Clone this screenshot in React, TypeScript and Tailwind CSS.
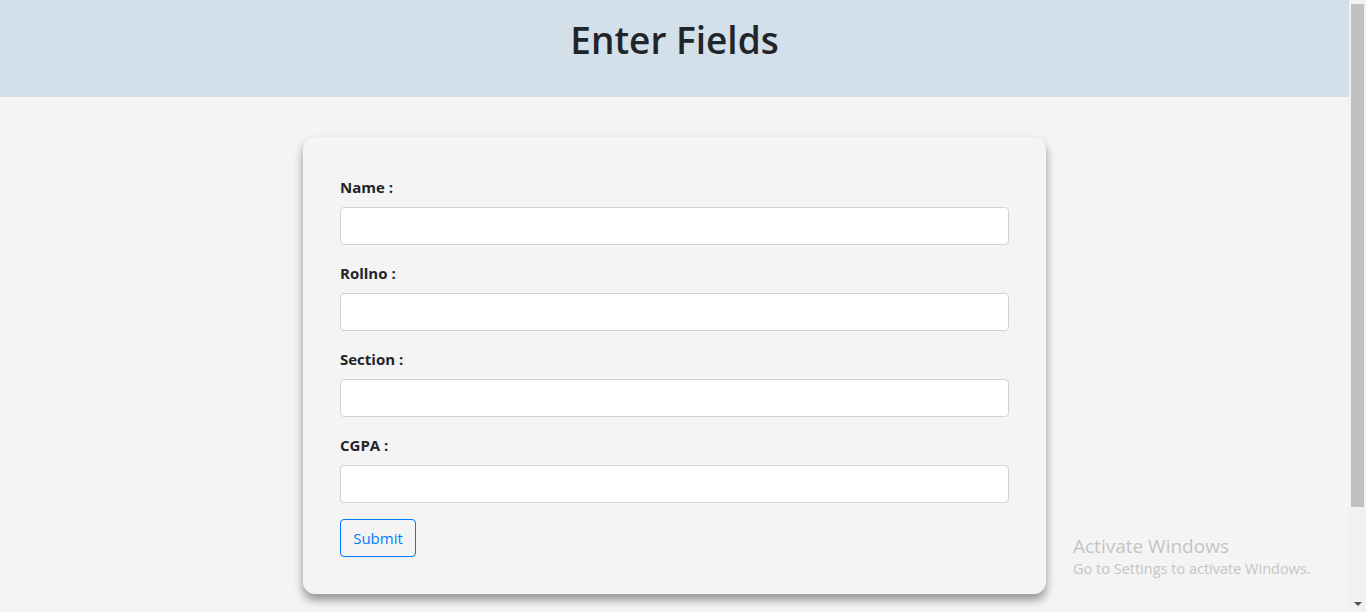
import React from "react";

const font = { fontFamily: '"Open Sans", "Noto Sans", "Liberation Sans", sans-serif' };

function Field({ label }: { label: string }) {
  return (
    <div className="mb-4">
      <label className="block mb-2 text-[15px] leading-6 font-bold text-[#212529]">{label}</label>
      <input
        type="text"
        className="block w-full h-[38px] rounded-[4px] border border-[#ced4da] bg-white px-3 outline-none"
      />
    </div>
  );
}

export default function App() {
  return (
    <div className="relative flex h-[612px] w-full overflow-hidden bg-[#f4f4f4]" style={font}>
      <div className="flex-1 flex flex-col">
        <header className="h-[97px] bg-[#d3dfe9] flex items-start justify-center">
          <h1 className="mt-[15px] text-[37px] leading-[50px] font-semibold text-[#212529]">Enter Fields</h1>
        </header>
        <div className="flex justify-center pt-10">
          <div className="w-[743px] rounded-[12px] bg-[#f4f4f4] px-[37px] pt-[38px] pb-[37px] shadow-[0_6px_10px_rgba(0,0,0,0.4)]">
            <Field label="Name :" />
            <Field label="Rollno :" />
            <Field label="Section :" />
            <Field label="CGPA :" />
            <button className="h-[38px] w-[76px] rounded-[4px] border border-[#007bff] text-[#007bff] text-[15px] bg-transparent">
              Submit
            </button>
          </div>
        </div>
      </div>
      <div className="w-[17px] bg-[#f1f1f1] flex flex-col items-center">
        <div className="mt-[4px] h-[503px] w-[13px] bg-[#c1c1c1]" />
        <div className="mt-auto mb-[6px] w-0 h-0 border-l-[4px] border-r-[4px] border-t-[4px] border-l-transparent border-r-transparent border-t-[#505050]" />
      </div>
      <div className="absolute left-[1073px] top-[533px] text-[#c4c4c4] pointer-events-none">
        <div className="text-[19px] leading-[26px]">Activate Windows</div>
        <div className="text-[14.5px] leading-[20px]">Go to Settings to activate Windows.</div>
      </div>
    </div>
  );
}
